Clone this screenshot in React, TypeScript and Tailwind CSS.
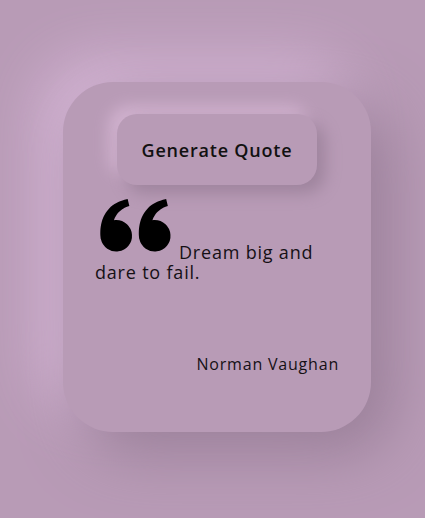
import React from "react";
import { BiSolidQuoteAltLeft } from "react-icons/bi";

export default function App() {
  return (
    <div
      className="w-[425px] h-[518px] bg-[#b89bb6] flex items-start overflow-hidden"
      style={{ fontFamily: '"Open Sans", "Noto Sans", sans-serif' }}
    >
      <div className="ml-[63px] mt-[82px] w-[308px] h-[350px] rounded-[50px] bg-[#b89bb6] shadow-[20px_20px_60px_#987e97,-20px_-20px_60px_#dabadb] px-[32px] pt-[32px] flex flex-col">
        <button className="self-center w-[200px] h-[71px] rounded-[20px] bg-[#b89bb6] shadow-[8px_8px_16px_#9e849d,-8px_-8px_16px_#d2b3d0] text-[18px] leading-[20px] font-semibold text-[#111] tracking-[0.8px]">
          Generate Quote
        </button>
        <p className="mt-0 text-[18px] leading-[20px] tracking-[0.8px] text-[#151015]">
          <BiSolidQuoteAltLeft className="inline-block w-[85px] h-[84px] -ml-[2px] mr-[1px] -mb-[10px] align-baseline text-black" />
          Dream big and dare to fail.
        </p>
        <p className="mt-auto mb-[58px] self-end text-[16px] leading-[20px] tracking-[0.8px] text-[#151015]">Norman Vaughan</p>
      </div>
    </div>
  );
}
